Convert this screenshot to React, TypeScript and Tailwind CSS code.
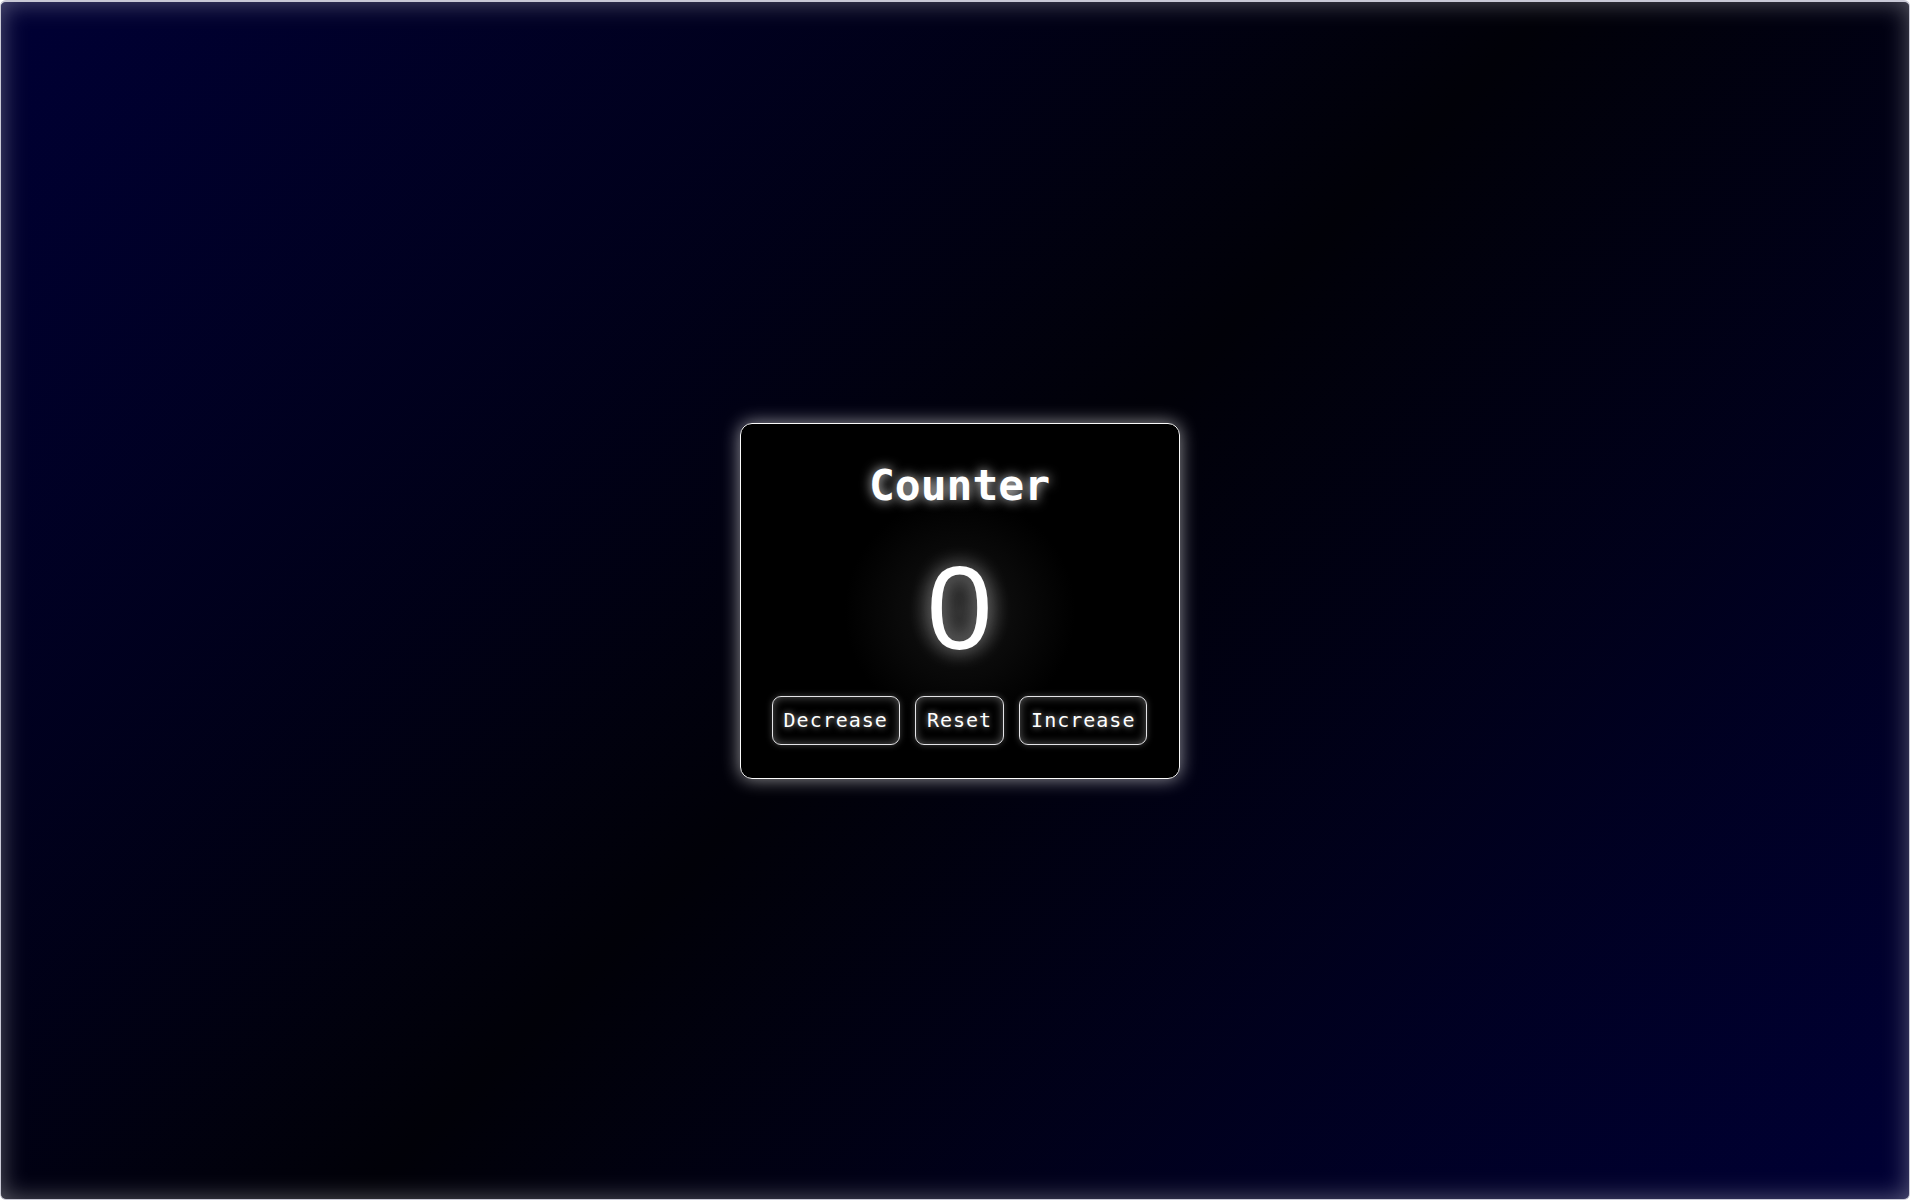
import React, { useState } from 'react'

export default function App() {
  const [count, setCount] = useState(0)

  const btn =
    "h-[49px] px-[11px] flex items-center justify-center rounded-[9px] border border-[#e4e4e7] bg-black text-white text-[20px] leading-none tracking-[1px] shadow-[inset_0_0_10px_rgba(255,255,255,0.35),0_0_6px_rgba(255,255,255,0.25)] [text-shadow:0_0_6px_rgba(255,255,255,0.7)]"

  return (
    <div
      className="w-[1910px] h-[1200px] flex items-center justify-center pl-[9px] rounded-[6px] border border-[#c9c9d6] border-t-2 bg-[linear-gradient(135deg,#000035_0%,#010108_50%,#000035_100%)] shadow-[inset_0_0_24px_rgba(255,255,255,0.35)]"
      style={{ fontFamily: '"DejaVu Sans Mono", "Liberation Mono", monospace' }}
    >
      {/* card */}
      <div className="w-[440px] h-[356px] flex flex-col items-center pt-[40px] rounded-[12px] border-[1.5px] border-[#fafafa] bg-[radial-gradient(circle_at_50%_53%,#2a2a2a_0%,#0b0b0b_18%,#000000_40%)] shadow-[0_0_18px_rgba(255,255,255,0.6)]">
        <h1 className="text-[43px] leading-none font-bold text-white [text-shadow:0_0_12px_rgba(255,255,255,0.85)]">
          Counter
        </h1>
        <div
          className="mt-[42px] text-[118px] leading-none font-normal text-white [text-shadow:0_0_20px_rgba(255,255,255,0.6)]"
          style={{ fontFamily: '"Liberation Sans", sans-serif' }}
        >
          {count}
        </div>
        <div className="mt-[29px] flex gap-[15px]">
          <button className={btn} onClick={() => setCount(c => c - 1)}>Decrease</button>
          <button className={btn} onClick={() => setCount(0)}>Reset</button>
          <button className={btn} onClick={() => setCount(c => c + 1)}>Increase</button>
        </div>
      </div>
    </div>
  )
}
